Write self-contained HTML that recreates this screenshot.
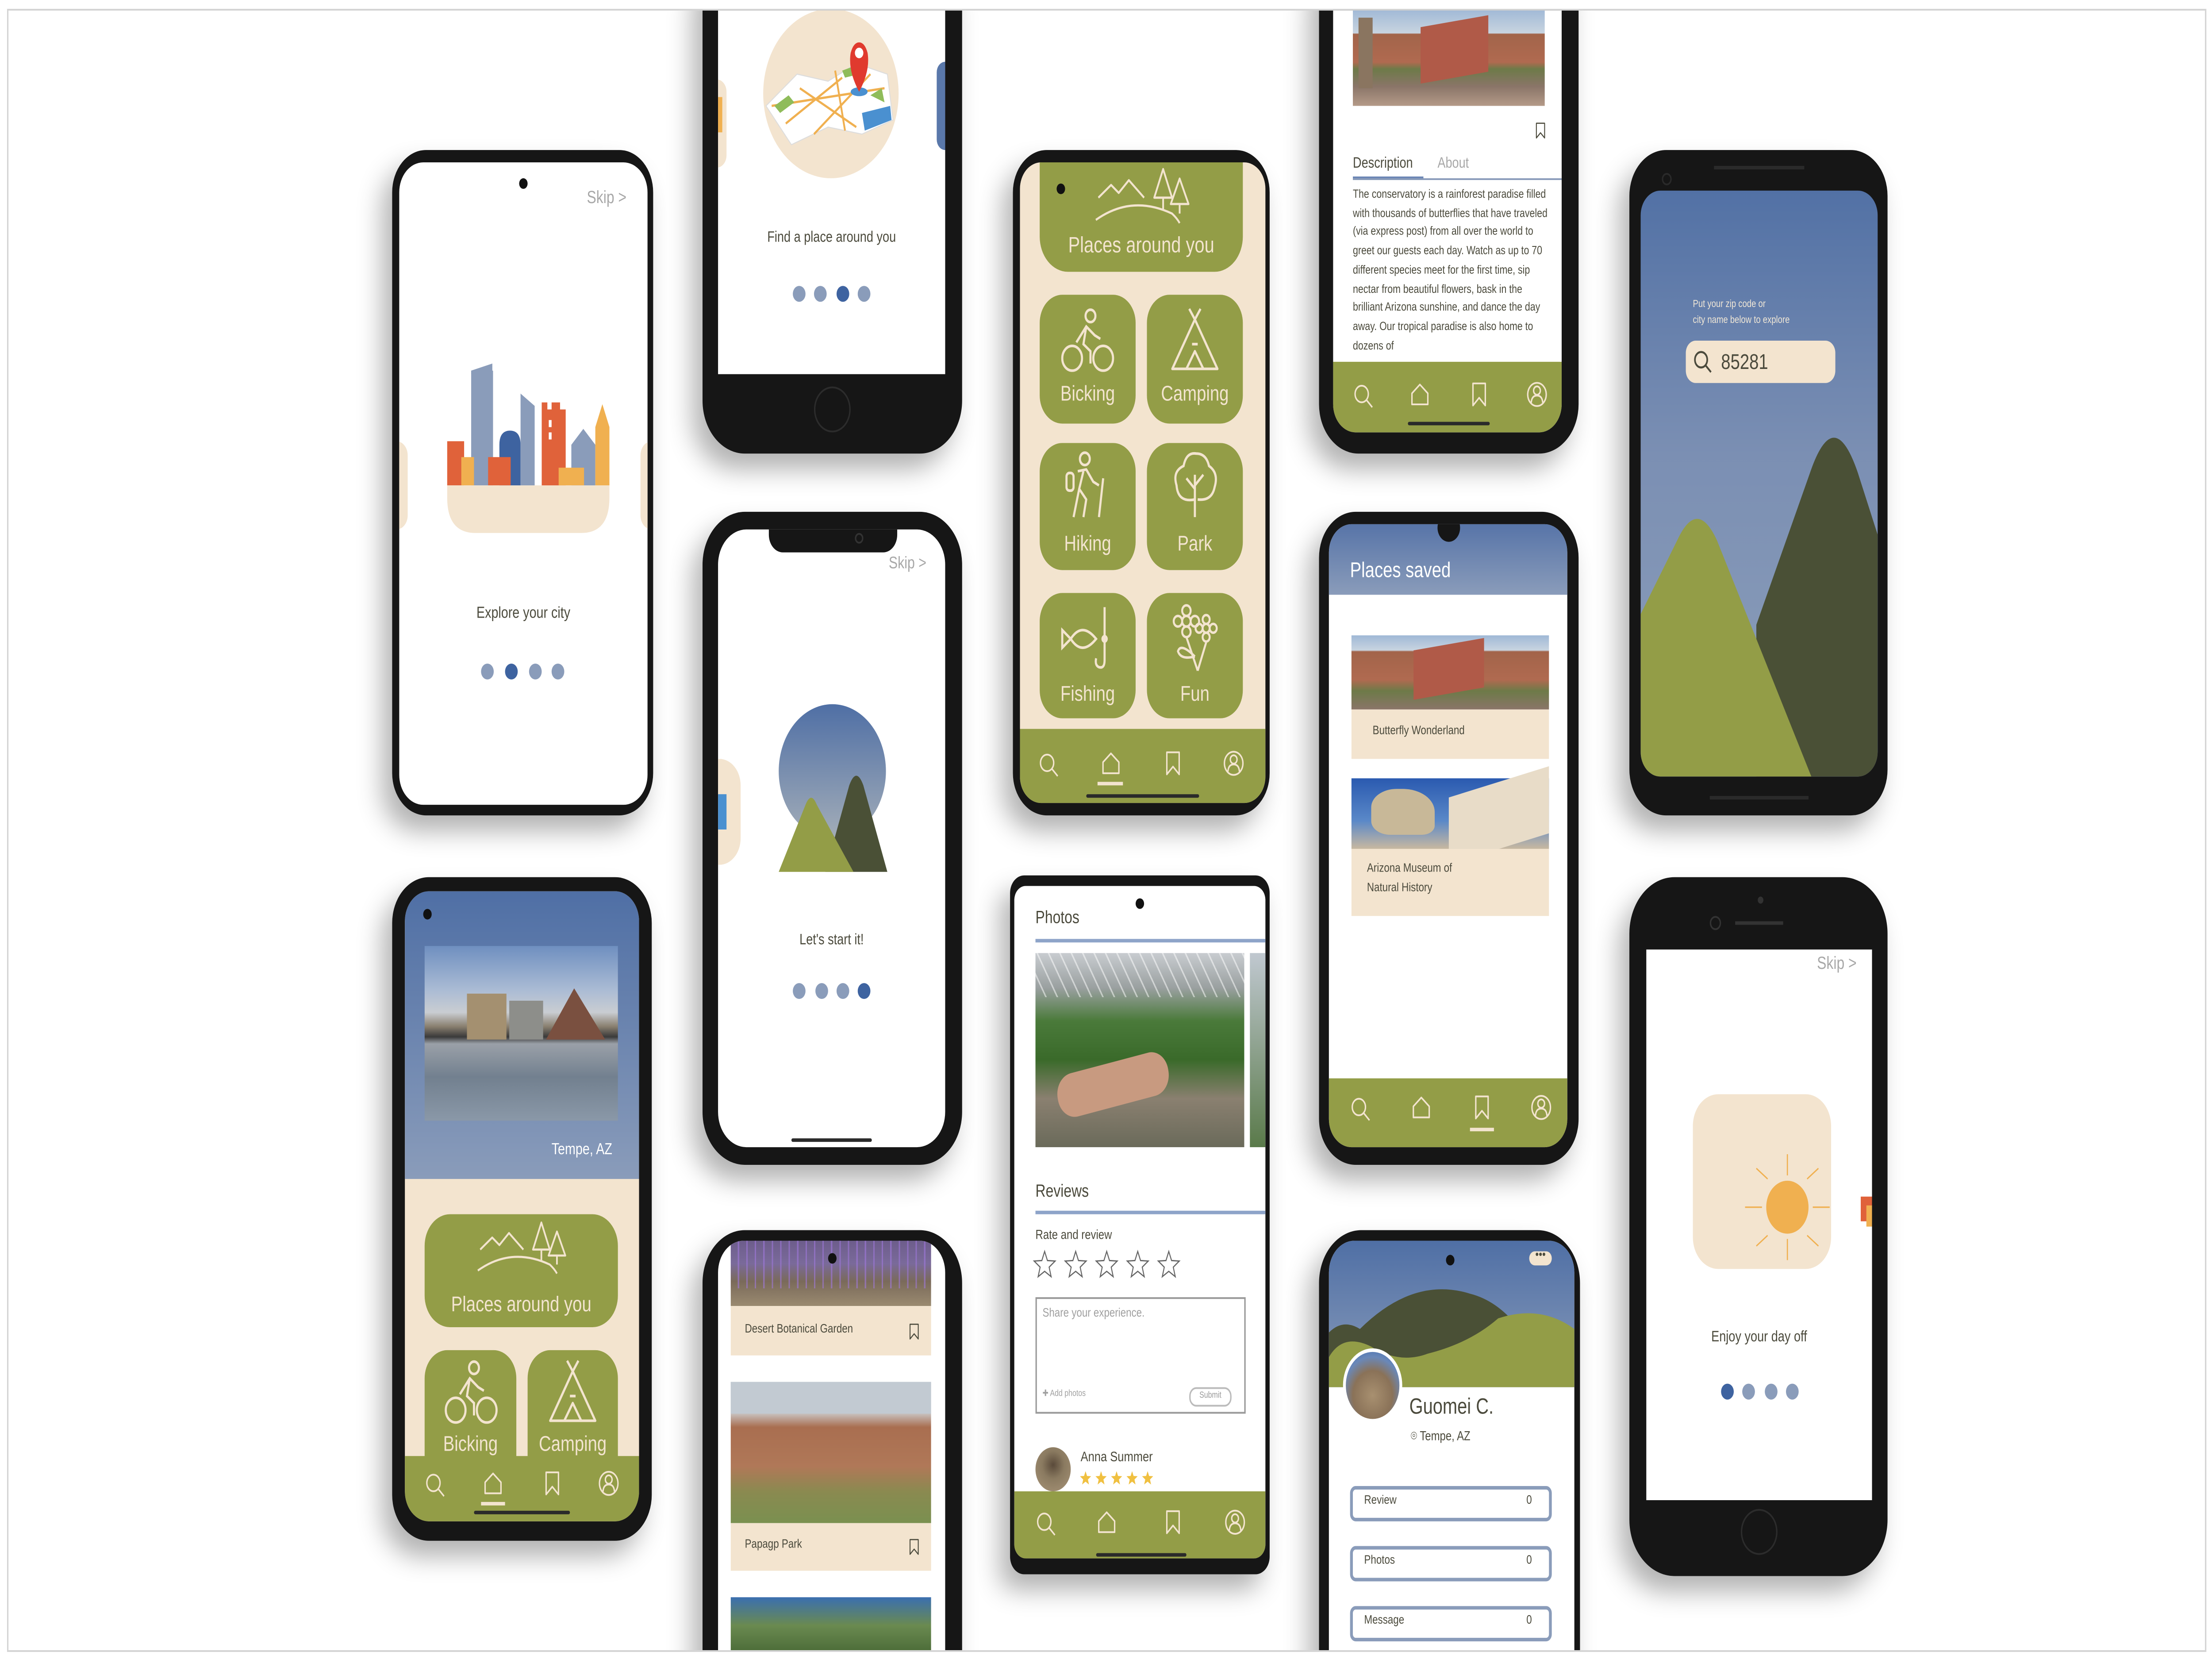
<!DOCTYPE html>
<html><head><meta charset="utf-8">
<style>
html,body{margin:0;padding:0;background:#fff;overflow:hidden;}
body{width:100vw;height:100vh;position:relative;font-family:"Liberation Sans",sans-serif;}
#w{position:absolute;left:0;top:0;width:1568px;height:940px;transform:scale(3.1888);transform-origin:0 0;}
#clip{position:absolute;left:5px;top:5px;width:1557px;height:929px;border:1px solid #d4d4d4;overflow:hidden;}
#in{position:absolute;left:-6px;top:-6px;width:1568px;height:940px;}
.a{position:absolute;}
.ph{position:absolute;background:#161616;box-shadow:-7px 9px 16px rgba(0,0,0,.30);}
.sc{position:absolute;overflow:hidden;}
.t{position:absolute;white-space:nowrap;color:#4b4a3c;}
.dot{position:absolute;width:9px;height:9px;border-radius:50%;background:#8a9cba;}
.dot.on{background:#3e63a0;}
.g{background:#939d47;}
.be{background:#f3e4cf;}
.tile{position:absolute;background:#939d47;border-radius:16px;}
.tile span{position:absolute;left:0;right:0;text-align:center;color:#f3e4cf;font-size:12px;}
.nav{position:absolute;left:0;right:0;background:#939d47;}
.ic{position:absolute;width:15px;height:15px;}
.bar{position:absolute;height:2px;background:#2a2a2a;border-radius:1px;}
</style></head><body>
<svg width="0" height="0" style="position:absolute">
<defs>
<symbol id="s" viewBox="0 0 24 24"><g fill="none" stroke="#f3e4cf" stroke-width="1.6"><circle cx="10" cy="10" r="7.5"/><path d="M15.5 15.5L22 22"/></g></symbol>
<symbol id="h" viewBox="0 0 24 24"><path d="M3 21V11L12 3L21 11V21Z" fill="none" stroke="#f3e4cf" stroke-width="1.6" stroke-linejoin="round"/></symbol>
<symbol id="b" viewBox="0 0 24 24"><path d="M5 2H19V22L12 15L5 22Z" fill="none" stroke="#f3e4cf" stroke-width="1.6" stroke-linejoin="round"/></symbol>
<symbol id="bd" viewBox="0 0 24 24"><path d="M5 2H19V22L12 15L5 22Z" fill="none" stroke="#4b4a3c" stroke-width="1.6" stroke-linejoin="round"/></symbol>
<symbol id="p" viewBox="0 0 24 24"><g fill="none" stroke="#f3e4cf" stroke-width="1.6"><circle cx="12" cy="12" r="10.5"/><circle cx="12" cy="8.5" r="3.8"/><path d="M5.5 19.5Q6 13 12 13Q18 13 18.5 19.5"/></g></symbol>
<symbol id="mt" viewBox="0 0 80 40"><g fill="none" stroke="#f3e4cf" stroke-width="1.4" stroke-linejoin="round"><path d="M4 20L14 12L20 17L28 9L40 20"/><path d="M2 34Q30 18 62 30Q66 33 68 36"/><path d="M55 2L48 20H62Z"/><path d="M55 20V28"/><path d="M68 8L61 24H75Z"/><path d="M68 24V30"/></g></symbol>
<symbol id="bike" viewBox="0 0 40 40"><g fill="none" stroke="#f3e4cf" stroke-width="1.5"><circle cx="22" cy="6" r="3.5"/><circle cx="9" cy="30" r="7"/><circle cx="31" cy="30" r="7"/><path d="M12 21L19 12L25 17L29 19M19 12L17 22L22 26V33"/></g></symbol>
<symbol id="tent" viewBox="0 0 40 40"><g fill="none" stroke="#f3e4cf" stroke-width="1.5" stroke-linejoin="round"><path d="M16 2L20 8L24 2M20 8L4 36H36Z"/><path d="M14 36L20 26L26 36"/><path d="M18 22H22"/></g></symbol>
<symbol id="hike" viewBox="0 0 40 40"><g fill="none" stroke="#f3e4cf" stroke-width="1.5" stroke-linejoin="round"><circle cx="18" cy="5" r="3.5"/><rect x="5" y="13" width="5" height="10" rx="2"/><path d="M13 12L19 11L24 18L28 20M17 12L14 22L19 28L17 38M14 22L10 38M31 16L28 38"/></g></symbol>
<symbol id="tree" viewBox="0 0 40 40"><g fill="none" stroke="#f3e4cf" stroke-width="1.5"><path d="M20 38V14M20 22L14 16M20 20L26 14"/><path d="M20 28Q8 30 7 20Q4 12 12 9Q14 1 21 2Q28 2 30 9Q37 13 34 21Q32 29 22 28"/></g></symbol>
<symbol id="fish" viewBox="0 0 40 40"><g fill="none" stroke="#f3e4cf" stroke-width="1.5"><path d="M2 15L8 20L2 25Z"/><path d="M8 20Q16 10 26 20Q16 30 8 20"/><path d="M32 2V32Q32 37 28 36Q25 35 26 31"/><circle cx="32" cy="20" r="1.5"/></g></symbol>
<symbol id="flow" viewBox="0 0 40 40"><g fill="none" stroke="#f3e4cf" stroke-width="1.4"><circle cx="14" cy="10" r="3"/><circle cx="14" cy="4" r="3"/><circle cx="8" cy="10" r="3"/><circle cx="20" cy="10" r="3"/><circle cx="14" cy="16" r="3"/><circle cx="28" cy="14" r="2.5"/><circle cx="28" cy="9" r="2.5"/><circle cx="33" cy="14" r="2.5"/><circle cx="23" cy="14" r="2.5"/><circle cx="28" cy="19" r="2.5"/><path d="M14 19L22 38M28 22L22 38M20 30Q10 22 8 27Q10 32 20 30"/></g></symbol>
<symbol id="star" viewBox="0 0 24 24"><path d="M12 1.5L14.8 8.8L22.5 9.2L16.5 14.1L18.5 21.7L12 17.4L5.5 21.7L7.5 14.1L1.5 9.2L9.2 8.8Z" fill="none" stroke="#666" stroke-width="1"/></symbol>
<symbol id="stary" viewBox="0 0 24 24"><path d="M12 1.5L14.8 8.8L22.5 9.2L16.5 14.1L18.5 21.7L12 17.4L5.5 21.7L7.5 14.1L1.5 9.2L9.2 8.8Z" fill="#f0c040"/></symbol>
</defs></svg>
<div id="w"><div id="clip"><div id="in">

<!-- PHONE A -->
<div class="ph" style="left:278px;top:85px;width:185px;height:377px;border-radius:24px;"></div>
<div class="sc" style="left:283px;top:92px;width:176px;height:364px;border-radius:17px;background:#fff;">
 <div class="a" style="left:85px;top:9px;width:6px;height:6px;border-radius:50%;background:#111"></div>
 <div class="t" style="left:133px;top:15px;font-size:10px;color:#a8a8a8">Skip &gt;</div>
 <div class="a be" style="left:-10px;top:158px;width:16px;height:50px;border-radius:8px"></div>
 <div class="a be" style="left:171px;top:158px;width:16px;height:50px;border-radius:8px"></div>
 <div class="t" style="left:0;width:176px;text-align:center;top:250px;font-size:9px">Explore your city</div>
 <div class="dot" style="left:58px;top:284px"></div><div class="dot on" style="left:75px;top:284px"></div><div class="dot" style="left:92px;top:284px"></div><div class="dot" style="left:108px;top:284px"></div>
</div>
<svg class="a" style="left:0;top:0" width="1568" height="940" viewBox="0 0 1568 940">
 <path d="M317 275H432V282Q432 302 412 302H337Q317 302 317 282Z" fill="#f3e4cf"/>
 <rect x="317" y="250" width="12" height="25" fill="#e0623a"/>
 <rect x="334" y="210" width="15.5" height="65" fill="#8a9cba"/><path d="M334 210L349 206V212H334Z" fill="#8a9cba"/>
 <rect x="327" y="259" width="9" height="16" fill="#f0b050"/>
 <path d="M354 275V252Q354 244 361.5 244Q369 244 369 252V275Z" fill="#3e63a0"/>
 <rect x="346" y="259" width="16" height="16" fill="#e0623a"/>
 <path d="M369 223L379 230V275H369Z" fill="#8a9cba"/>
 <path d="M384 228H388V232H391V228H397V232H401V275H384Z" fill="#e0623a"/>
 <rect x="389" y="238" width="2" height="4" fill="#fff"/><rect x="389" y="245" width="2" height="4" fill="#fff"/>
 <path d="M405 252L413.5 243L422 252V275H405Z" fill="#8a9cba"/>
 <rect x="396" y="265" width="18" height="10" fill="#f0b050"/>
 <path d="M422 242L427 229L432 242V275H422Z" fill="#f0b050"/>
</svg>

<!-- PHONE B -->
<div class="ph" style="left:498px;top:-30px;width:184px;height:287px;border-radius:30px;"></div>
<div class="sc" style="left:509px;top:-10px;width:161px;height:222px;background:#fff;">
 <div class="a be" style="left:-8px;top:55px;width:14px;height:50px;border-radius:7px"></div>
 <div class="a" style="left:-2px;top:65px;width:5px;height:20px;background:#f0b050"></div>
 <div class="a" style="left:155px;top:45px;width:12px;height:50px;border-radius:6px;background:#5a78aa"></div>
 <div class="a be" style="left:32px;top:15px;width:96px;height:96px;border-radius:50%"></div>
 <svg class="a" style="left:28px;top:30px" width="104" height="70" viewBox="0 0 104 70">
  <path d="M6 40L28 22L50 26L70 16L92 22L96 48L74 56L50 52L24 62Z" fill="#fff" stroke="#ddd" stroke-width=".6"/>
  <path d="M10 40L90 30M20 50L60 24M40 56L80 22M30 30L70 52M55 20L62 54" stroke="#f0b050" stroke-width="1.3" fill="none"/>
  <path d="M74 44L94 40L95 48L76 54Z" fill="#4a90d0"/>
  <path d="M12 40L22 34L26 38L16 44Z" fill="#8fbc5a"/><path d="M60 20L70 17L72 22L62 24Z" fill="#8fbc5a"/><path d="M80 34L88 30L90 38Z" fill="#8fbc5a"/>
  <ellipse cx="72" cy="32" rx="6" ry="2.5" fill="#4a90d0"/>
  <path d="M72 32Q64 20 66 10Q68 4 72 4Q76 4 78 10Q80 20 72 32Z" fill="#e03a2e"/>
  <circle cx="72" cy="10" r="3" fill="#fff"/>
 </svg>
 <div class="t" style="left:0;width:161px;text-align:center;top:139px;font-size:8.5px">Find a place around you</div>
 <div class="dot" style="left:53px;top:172px"></div><div class="dot" style="left:68px;top:172px"></div><div class="dot on" style="left:84px;top:172px"></div><div class="dot" style="left:99px;top:172px"></div>
</div>
<div class="a" style="left:577px;top:219px;width:24px;height:24px;border-radius:50%;border:1.5px solid #2c2c2c"></div>

<!-- PHONE C -->
<div class="ph" style="left:718px;top:85px;width:182px;height:377px;border-radius:24px;"></div>
<div class="sc be" style="left:723px;top:92px;width:174px;height:363px;border-radius:15px;">
 <div class="a g" style="left:14px;top:-20px;width:144px;height:82px;border-radius:20px"></div>
 <div class="a" style="left:26px;top:12px;width:6px;height:6px;border-radius:50%;background:#111"></div>
 <svg class="a" style="left:52px;top:2px" width="72" height="36"><use href="#mt"/></svg>
 <div class="t" style="left:14px;width:144px;text-align:center;top:40px;font-size:12.5px;color:#f3e4cf">Places around you</div>
 <div class="tile" style="left:14px;top:75px;width:68px;height:73px"><svg class="a" style="left:14px;top:6px" width="40" height="40"><use href="#bike"/></svg><span style="top:49px">Bicking</span></div>
 <div class="tile" style="left:90px;top:75px;width:68px;height:73px"><svg class="a" style="left:14px;top:6px" width="40" height="40"><use href="#tent"/></svg><span style="top:49px">Camping</span></div>
 <div class="tile" style="left:14px;top:159px;width:68px;height:72px"><svg class="a" style="left:14px;top:4px" width="40" height="40"><use href="#hike"/></svg><span style="top:50px">Hiking</span></div>
 <div class="tile" style="left:90px;top:159px;width:68px;height:72px"><svg class="a" style="left:14px;top:4px" width="40" height="40"><use href="#tree"/></svg><span style="top:50px">Park</span></div>
 <div class="tile" style="left:14px;top:244px;width:68px;height:71px"><svg class="a" style="left:14px;top:6px" width="40" height="40"><use href="#fish"/></svg><span style="top:50px">Fishing</span></div>
 <div class="tile" style="left:90px;top:244px;width:68px;height:71px"><svg class="a" style="left:14px;top:6px" width="40" height="40"><use href="#flow"/></svg><span style="top:50px">Fun</span></div>
 <div class="nav" style="top:321px;height:42px">
  <svg class="ic" style="left:13px;top:13px"><use href="#s"/></svg>
  <svg class="ic" style="left:57px;top:12px"><use href="#h"/></svg>
  <div class="a" style="left:55px;top:30px;width:18px;height:2px;background:#f3e4cf"></div>
  <svg class="ic" style="left:101px;top:12px"><use href="#b"/></svg>
  <svg class="ic" style="left:144px;top:12px"><use href="#p"/></svg>
  <div class="bar" style="left:47px;top:37px;width:80px"></div>
 </div>
</div>

<!-- PHONE D -->
<div class="ph" style="left:935px;top:-30px;width:184px;height:287px;border-radius:28px;"></div>
<div class="sc" style="left:945px;top:-10px;width:162px;height:255px;border-radius:0 0 16px 16px;background:#fff;">
 <div class="a" style="left:14px;top:15px;width:136px;height:55px;background:linear-gradient(180deg,#9fb8d6 0%,#c8d4e0 25%,#a2644a 26%,#b06a50 55%,#6d7a48 62%,#8a7568 80%,#b49a88 100%)"></div>
 <div class="a" style="left:62px;top:22px;width:48px;height:32px;background:#b05a48;transform:skewY(-8deg)"></div>
 <div class="a" style="left:18px;top:20px;width:10px;height:40px;background:#8a7560"></div>
 <svg class="a" style="left:142px;top:78px" width="10" height="12" viewBox="0 0 24 24"><use href="#bd"/></svg>
 <div class="t" style="left:14px;top:97px;font-size:8.5px">Description</div>
 <div class="t" style="left:74px;top:97px;font-size:8.5px;color:#a8a8a8">About</div>
 <div class="a" style="left:14px;top:110px;width:50px;height:1.5px;background:#6c87b5"></div>
 <div class="a" style="left:14px;top:111px;width:148px;height:1px;background:#8a9cba"></div>
 <div class="a" style="left:14px;top:116px;width:140px;font-size:6.7px;line-height:10.7px;color:#4b4a3c">The conservatory is a rainforest paradise filled with thousands of butterflies that have traveled (via express post) from all over the world to greet our guests each day. Watch as up to 70 different species meet for the first time, sip nectar from beautiful flowers, bask in the brilliant Arizona sunshine, and dance the day away. Our tropical paradise is also home to dozens of</div>
 <div class="nav" style="top:215px;height:40px">
  <svg class="ic" style="left:14px;top:12px"><use href="#s"/></svg>
  <svg class="ic" style="left:54px;top:11px"><use href="#h"/></svg>
  <svg class="ic" style="left:96px;top:11px"><use href="#b"/></svg>
  <svg class="ic" style="left:137px;top:11px"><use href="#p"/></svg>
  <div class="bar" style="left:53px;top:34px;width:58px"></div>
 </div>
</div>

<!-- PHONE E -->
<div class="ph" style="left:1155px;top:85px;width:183px;height:377px;border-radius:26px;"></div>
<div class="a" style="left:1215px;top:94px;width:64px;height:2px;background:#2a2a2a"></div>
<div class="a" style="left:1212px;top:451px;width:70px;height:2px;background:#2a2a2a"></div>
<div class="a" style="left:1178px;top:98px;width:5px;height:5px;border-radius:50%;border:1px solid #2a2a2a"></div>
<div class="sc" style="left:1163px;top:108px;width:168px;height:332px;border-radius:14px;background:linear-gradient(180deg,#5271a5 0%,#7b8fb3 45%,#8c9fba 100%);">
 <div class="t" style="left:37px;top:61px;font-size:5.8px;line-height:8.5px;color:#efe6d6">Put your zip code or<br>city name below to explore</div>
 <div class="a be" style="left:32px;top:85px;width:106px;height:24px;border-radius:7px"></div>
 <svg class="a" style="left:37px;top:90px" width="14" height="14" viewBox="0 0 24 24"><g fill="none" stroke="#4b4a3c" stroke-width="2"><circle cx="10" cy="10" r="7.5"/><path d="M15.5 15.5L22 22"/></g></svg>
 <div class="t" style="left:57px;top:90px;font-size:12px">85281</div>
 <svg class="a" style="left:0;top:0" width="168" height="332" viewBox="0 0 168 332">
  <path d="M82 246L120 160Q137 120 154 160L168 195V332H82Z" fill="#4a5036"/>
  <path d="M0 240L26 198Q40 174 54 198L121 332H0Z" fill="#939d47"/>
 </svg>
</div>

<!-- PHONE F -->
<div class="ph" style="left:278px;top:497px;width:184px;height:376px;border-radius:26px;"></div>
<div class="sc be" style="left:287px;top:505px;width:166px;height:357px;border-radius:17px;">
 <div class="a" style="left:0;top:0;width:166px;height:163px;background:linear-gradient(180deg,#4f6fa5,#8a9cba)"></div>
 <div class="a" style="left:13px;top:10px;width:6px;height:6px;border-radius:50%;background:#111"></div>
 <div class="a" style="left:14px;top:31px;width:137px;height:99px;background:linear-gradient(180deg,#6f8fc0 0%,#aabbd4 25%,#c9cdd2 38%,#8a8070 46%,#3a3a3a 52%,#9aa0a8 56%,#72808f 75%,#8a98a8 100%)"></div>
 <div class="a" style="left:44px;top:58px;width:28px;height:26px;background:#a49070"></div>
 <div class="a" style="left:74px;top:62px;width:24px;height:22px;background:#8d8e8a"></div>
 <div class="a" style="left:100px;top:55px;width:0;height:0;border-left:20px solid transparent;border-right:22px solid transparent;border-bottom:29px solid #7a5040"></div>
 <div class="t" style="left:0;width:147px;text-align:right;top:141px;font-size:9px;color:#fff">Tempe, AZ</div>
 <div class="a g" style="left:14px;top:183px;width:137px;height:64px;border-radius:18px"></div>
 <svg class="a" style="left:50px;top:186px" width="68" height="34"><use href="#mt"/></svg>
 <div class="t" style="left:14px;width:137px;text-align:center;top:227px;font-size:12px;color:#f3e4cf">Places around you</div>
 <div class="tile" style="left:14px;top:260px;width:65px;height:80px"><svg class="a" style="left:13px;top:4px" width="40" height="40"><use href="#bike"/></svg><span style="top:46px">Bicking</span></div>
 <div class="tile" style="left:87px;top:260px;width:64px;height:80px"><svg class="a" style="left:12px;top:4px" width="40" height="40"><use href="#tent"/></svg><span style="top:46px">Camping</span></div>
 <div class="nav" style="top:320px;height:37px">
  <svg class="ic" style="left:14px;top:9px"><use href="#s"/></svg>
  <svg class="ic" style="left:55px;top:8px"><use href="#h"/></svg>
  <div class="a" style="left:54px;top:26px;width:17px;height:2px;background:#f3e4cf"></div>
  <svg class="ic" style="left:97px;top:8px"><use href="#b"/></svg>
  <svg class="ic" style="left:137px;top:8px"><use href="#p"/></svg>
  <div class="bar" style="left:49px;top:31px;width:68px"></div>
 </div>
</div>

<!-- PHONE G -->
<div class="ph" style="left:498px;top:290px;width:184px;height:370px;border-radius:30px;"></div>
<div class="sc" style="left:509px;top:300px;width:161px;height:350px;border-radius:20px;background:#fff;">
 <div class="a" style="left:36px;top:-5px;width:91px;height:18px;border-radius:0 0 10px 10px;background:#161616"></div>
 <div class="a" style="left:97px;top:2px;width:4px;height:4px;border-radius:50%;border:1px solid #333"></div>
 <div class="t" style="left:121px;top:14px;font-size:9.5px;color:#a8a8a8">Skip &gt;</div>
 <div class="a be" style="left:-14px;top:130px;width:30px;height:60px;border-radius:15px"></div>
 <div class="a" style="left:0;top:150px;width:6px;height:20px;background:#4a90d0"></div>
 <div class="a" style="left:43px;top:99px;width:76px;height:76px;border-radius:50%;background:linear-gradient(180deg,#4f6fa5,#a3adb8)"></div>
 <svg class="a" style="left:0;top:0" width="161" height="200" viewBox="0 0 161 200">
  <path d="M76 194L93 145Q98 134 103 145L120 194Z" fill="#4a5036"/>
  <path d="M43 194L62 156Q66 148 70 156L96 194Z" fill="#939d47"/>
 </svg>
 <div class="t" style="left:0;width:161px;text-align:center;top:227px;font-size:8.5px">Let's start it!</div>
 <div class="dot" style="left:53px;top:257px"></div><div class="dot" style="left:69px;top:257px"></div><div class="dot" style="left:84px;top:257px"></div><div class="dot on" style="left:99px;top:257px"></div>
 <div class="bar" style="left:52px;top:345px;width:57px"></div>
</div>

<!-- PHONE H -->
<div class="ph" style="left:498px;top:697px;width:184px;height:270px;border-radius:30px;"></div>
<div class="sc" style="left:509px;top:703px;width:161px;height:260px;border-radius:18px;background:#fff;">
 <div class="a" style="left:9px;top:-3px;width:142px;height:40px;background:linear-gradient(180deg,#6a5a88 0%,#7a6a9a 40%,#7a6a5a 65%,#9a8a70 100%)"></div>
 <div class="a" style="left:9px;top:-3px;width:142px;height:30px;background:repeating-linear-gradient(90deg,transparent 0 5px,rgba(160,120,220,.6) 5px 6px)"></div>
 <div class="a" style="left:78px;top:7px;width:6px;height:6px;border-radius:50%;background:#111"></div>
 <div class="a be" style="left:9px;top:37px;width:142px;height:28px"></div>
 <div class="t" style="left:19px;top:47px;font-size:7px">Desert Botanical Garden</div>
 <svg class="a" style="left:134px;top:45px" width="10" height="13" viewBox="0 0 24 24"><use href="#bd"/></svg>
 <div class="a" style="left:9px;top:80px;width:142px;height:80px;background:linear-gradient(180deg,#b9c2cc 0%,#cfd5da 20%,#a96e50 32%,#b07858 60%,#8a8a50 78%,#7a9050 100%)"></div>
 <div class="a" style="left:9px;top:80px;width:142px;height:18px;background:#c2cad2"></div>
 <div class="a be" style="left:9px;top:160px;width:142px;height:27px"></div>
 <div class="t" style="left:19px;top:169px;font-size:7px">Papagp Park</div>
 <svg class="a" style="left:134px;top:167px" width="10" height="13" viewBox="0 0 24 24"><use href="#bd"/></svg>
 <div class="a" style="left:9px;top:202px;width:142px;height:40px;background:linear-gradient(180deg,#3a6fb0 0%,#6a8a50 40%,#3a5a2a 100%)"></div>
</div>

<!-- PHONE I -->
<div class="ph" style="left:716px;top:496px;width:184px;height:396px;border-radius:10px;"></div>
<div class="sc" style="left:719px;top:502px;width:178px;height:381px;border-radius:8px;background:#fff;">
 <div class="a" style="left:86px;top:7px;width:6px;height:6px;border-radius:50%;background:#111"></div>
 <div class="t" style="left:15px;top:13px;font-size:10px">Photos</div>
 <div class="a" style="left:15px;top:30px;width:163px;height:1.5px;background:#8ea4c9"></div>
 <div class="a" style="left:15px;top:38px;width:148px;height:110px;background:linear-gradient(180deg,#c8ccd0 0%,#9aa0a0 18%,#4a7a3a 35%,#3a6a2a 55%,#8a8070 75%,#6a6a5a 100%)"></div>
 <div class="a" style="left:15px;top:38px;width:148px;height:25px;background:repeating-linear-gradient(60deg,transparent 0 6px,rgba(255,255,255,.5) 6px 7px)"></div>
 <div class="a" style="left:30px;top:100px;width:80px;height:25px;border-radius:12px;background:#c89a80;transform:rotate(-12deg)"></div>
 <div class="a" style="left:167px;top:38px;width:11px;height:110px;background:linear-gradient(180deg,#c0c8d0,#5a7a4a)"></div>
 <div class="t" style="left:15px;top:168px;font-size:10px">Reviews</div>
 <div class="a" style="left:15px;top:184px;width:163px;height:1.5px;background:#8ea4c9"></div>
 <div class="t" style="left:15px;top:193px;font-size:7.5px">Rate and review</div>
 <svg class="a" style="left:13px;top:206px" width="110" height="17"><use href="#star" x="0" width="17" height="17"/><use href="#star" x="22" width="17" height="17"/><use href="#star" x="44" width="17" height="17"/><use href="#star" x="66" width="17" height="17"/><use href="#star" x="88" width="17" height="17"/></svg>
 <div class="a" style="left:15px;top:233px;width:147px;height:64px;border:1px solid #999"></div>
 <div class="t" style="left:20px;top:239px;font-size:7px;color:#a0a0a0">Share your experience.</div>
 <div class="t" style="left:20px;top:285px;font-size:5px;color:#a0a0a0">✚ Add photos</div>
 <div class="a" style="left:124px;top:284px;width:28px;height:9px;border:1px solid #bbb;border-radius:5px;font-size:5px;color:#999;text-align:center;line-height:9px">Submit</div>
 <div class="a" style="left:15px;top:318px;width:25px;height:25px;border-radius:50%;background:radial-gradient(circle at 50% 40%,#5a4a3a 0,#8a7a60 40%,#a89478 100%)"></div>
 <div class="t" style="left:47px;top:319px;font-size:8px">Anna Summer</div>
 <svg class="a" style="left:46px;top:331px" width="60" height="9"><use href="#stary" x="0" width="9" height="9"/><use href="#stary" x="11" width="9" height="9"/><use href="#stary" x="22" width="9" height="9"/><use href="#stary" x="33" width="9" height="9"/><use href="#stary" x="44" width="9" height="9"/></svg>
 <div class="nav" style="top:343px;height:38px">
  <svg class="ic" style="left:15px;top:11px"><use href="#s"/></svg>
  <svg class="ic" style="left:58px;top:10px"><use href="#h"/></svg>
  <svg class="ic" style="left:105px;top:10px"><use href="#b"/></svg>
  <svg class="ic" style="left:149px;top:10px"><use href="#p"/></svg>
  <div class="bar" style="left:58px;top:35px;width:64px"></div>
 </div>
</div>

<!-- PHONE J -->
<div class="ph" style="left:935px;top:290px;width:184px;height:370px;border-radius:26px;"></div>
<div class="sc" style="left:942px;top:297px;width:169px;height:353px;border-radius:16px;background:#fff;">
 <div class="a" style="left:0;top:0;width:169px;height:40px;background:linear-gradient(180deg,#5774a8,#8a9cba)"></div>
 <div class="a" style="left:77px;top:-6px;width:16px;height:16px;border-radius:50%;background:#161616"></div>
 <div class="t" style="left:15px;top:19px;font-size:12px;color:#fff">Places saved</div>
 <div class="a" style="left:16px;top:63px;width:140px;height:42px;background:linear-gradient(180deg,#9fb8d6 0%,#c8d4e0 20%,#a2644a 22%,#b06a50 60%,#6d7a48 75%,#8a7568 100%)"></div>
 <div class="a" style="left:60px;top:68px;width:50px;height:28px;background:#b05a48;transform:skewY(-8deg)"></div>
 <div class="a be" style="left:16px;top:105px;width:140px;height:28px"></div>
 <div class="t" style="left:31px;top:114px;font-size:7px">Butterfly Wonderland</div>
 <div class="a" style="left:16px;top:144px;width:140px;height:40px;background:linear-gradient(180deg,#2a5ab0 0%,#5a88c8 60%,#c8b8a0 100%)"></div>
 <div class="a" style="left:30px;top:150px;width:45px;height:26px;border-radius:40% 50% 20% 30%;background:#c8b898"></div>
 <div class="a" style="left:85px;top:146px;width:71px;height:38px;background:#e8dcc8;transform:skewY(-14deg)"></div>
 <div class="a be" style="left:16px;top:184px;width:140px;height:38px"></div>
 <div class="t" style="left:27px;top:190px;font-size:7px;line-height:11px">Arizona Museum of<br>Natural History</div>
 <div class="nav" style="top:314px;height:39px">
  <svg class="ic" style="left:15px;top:10px"><use href="#s"/></svg>
  <svg class="ic" style="left:58px;top:9px"><use href="#h"/></svg>
  <svg class="ic" style="left:101px;top:9px"><use href="#b"/></svg>
  <div class="a" style="left:100px;top:28px;width:17px;height:2px;background:#f3e4cf"></div>
  <svg class="ic" style="left:143px;top:9px"><use href="#p"/></svg>
 </div>
</div>

<!-- PHONE K -->
<div class="ph" style="left:935px;top:697px;width:185px;height:270px;border-radius:30px;"></div>
<div class="sc" style="left:942px;top:703px;width:174px;height:260px;border-radius:18px;background:#fff;">
 <div class="a" style="left:0;top:0;width:174px;height:83px;background:linear-gradient(180deg,#4f6fa5,#8a9cba)"></div>
 <svg class="a" style="left:0;top:0" width="174" height="83" viewBox="0 0 174 83">
  <path d="M0 52Q10 44 22 50Q60 20 100 30Q130 36 150 70L174 83H0Z" fill="#4a5036"/>
  <path d="M0 83V66Q10 52 30 60Q50 70 70 64Q100 58 120 44Q150 36 174 50V83Z" fill="#939d47"/>
 </svg>
 <div class="a" style="left:83px;top:8px;width:6px;height:6px;border-radius:50%;background:#111"></div>
 <div class="a" style="left:142px;top:6px;width:16px;height:8px;border-radius:4px;background:#f3e4cf;font-size:7px;line-height:5px;text-align:center;color:#4b4a3c">•••</div>
 <div class="a" style="left:10px;top:61px;width:38px;height:38px;border-radius:50%;border:2px solid #fff;background:radial-gradient(circle at 50% 65%,#a89070 0,#8a7258 45%,#6a88b8 70%,#3a68b0 100%)"></div>
 <div class="t" style="left:57px;top:87px;font-size:12.5px">Guomei C.</div>
 <div class="t" style="left:58px;top:106px;font-size:7.5px">⌾ Tempe, AZ</div>
 <div class="a" style="left:15px;top:139px;width:139px;height:16px;border:2px solid #8a9cba;border-radius:4px"></div>
 <div class="t" style="left:25px;top:144px;font-size:7px">Review</div><div class="t" style="left:140px;top:144px;font-size:7px">0</div>
 <div class="a" style="left:15px;top:173px;width:139px;height:16px;border:2px solid #8a9cba;border-radius:4px"></div>
 <div class="t" style="left:25px;top:178px;font-size:7px">Photos</div><div class="t" style="left:140px;top:178px;font-size:7px">0</div>
 <div class="a" style="left:15px;top:207px;width:139px;height:16px;border:2px solid #8a9cba;border-radius:4px"></div>
 <div class="t" style="left:25px;top:212px;font-size:7px">Message</div><div class="t" style="left:140px;top:212px;font-size:7px">0</div>
</div>

<!-- PHONE L -->
<div class="ph" style="left:1155px;top:497px;width:183px;height:396px;border-radius:32px;"></div>
<div class="a" style="left:1230px;top:522px;width:34px;height:2px;background:#333"></div>
<div class="a" style="left:1246px;top:508px;width:4px;height:4px;border-radius:50%;background:#333"></div>
<div class="a" style="left:1212px;top:519px;width:6px;height:6px;border-radius:50%;border:1px solid #333"></div>
<div class="a" style="left:1234px;top:855px;width:24px;height:24px;border-radius:50%;border:1.5px solid #2c2c2c"></div>
<div class="sc" style="left:1167px;top:538px;width:160px;height:312px;background:#fff;">
 <div class="t" style="left:121px;top:3px;font-size:10px;color:#a8a8a8">Skip &gt;</div>
 <div class="a be" style="left:33px;top:82px;width:98px;height:99px;border-radius:18px"></div>
 <div class="a" style="left:85px;top:131px;width:30px;height:30px;border-radius:50%;background:#f0b050"></div>
 <svg class="a" style="left:60px;top:106px" width="80" height="80" viewBox="0 0 80 80"><g stroke="#f0b050" stroke-width="0.8"><path d="M40 10V22M40 58V70M10 40H22M58 40H70M18 18L26 24M62 18L54 24M18 62L26 56M62 62L54 56"/></g></svg>
 <div class="a" style="left:152px;top:140px;width:8px;height:14px;background:#e0623a"></div>
 <div class="a" style="left:156px;top:145px;width:4px;height:12px;background:#f0b050"></div>
 <div class="t" style="left:0;width:160px;text-align:center;top:214px;font-size:8.5px">Enjoy your day off</div>
 <div class="dot on" style="left:53px;top:246px"></div><div class="dot" style="left:68px;top:246px"></div><div class="dot" style="left:84px;top:246px"></div><div class="dot" style="left:99px;top:246px"></div>
</div>

</div></div></div>
<script>
(function(){var w=document.getElementById('w');var sx=window.innerWidth/1568,sy=window.innerHeight/940;if(!(sx>0.1))sx=3.1888;if(!(sy>0.1))sy=sx;w.style.transform='scale('+sx+','+sy+')';})();
</script>
</body></html>
